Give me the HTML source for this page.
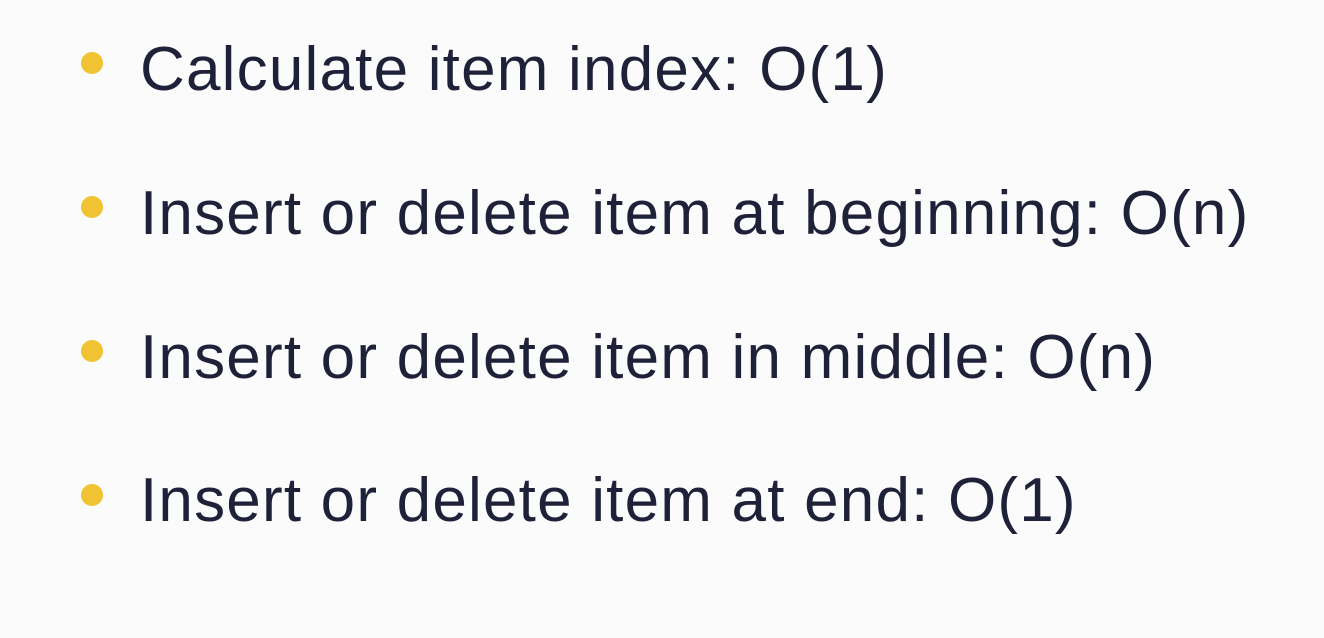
<!DOCTYPE html>
<html><head><style>
body{margin:0;width:1324px;height:638px;background:#fbfbfc;overflow:hidden;font-family:"Liberation Sans",sans-serif;color:#1f2139;}
.l{position:absolute;left:140px;font-size:62px;line-height:62px;white-space:nowrap;letter-spacing:1.2px}
.d{position:absolute;left:81px;width:22px;height:22px;border-radius:50%;background:#f1c232}
</style></head><body>
<div class="d" style="top:52px"></div><div class="l" style="top:39px">Calculate item index: O(1)</div>
<div class="d" style="top:196px"></div><div class="l" style="top:183px">Insert or delete item at beginning: O(n)</div>
<div class="d" style="top:340px"></div><div class="l" style="top:327px">Insert or delete item in middle: O(n)</div>
<div class="d" style="top:484px"></div><div class="l" style="top:470px">Insert or delete item at end: O(1)</div>
</body></html>
